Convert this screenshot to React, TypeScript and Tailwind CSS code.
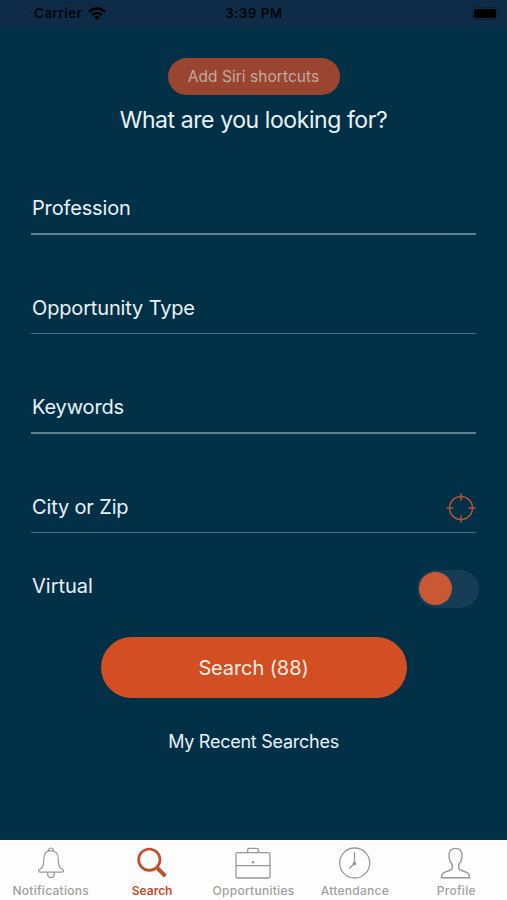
import { useState } from 'react';
import type { ReactNode } from 'react';
import clsx from 'clsx';

interface FieldProps {
  label: string;
  className: string;
  children?: ReactNode;
}

function Field({ label, className, children }: FieldProps) {
  return (
    <div className={clsx('flex items-end justify-between', className)}>
      <span className="text-[20px] leading-[30px] tracking-[-0.15px] pl-px">{label}</span>
      {children}
    </div>
  );
}

function StatusBar() {
  return (
    <div className="h-[27px] shrink-0 grid grid-cols-3 items-center pl-[15px] pr-[7px] bg-[#0e2c48] text-black text-[13.5px]">
      <div className="flex items-center">
        <span className="flex gap-[3px] w-[19px] pt-1">
          {[0, 1, 2, 3].map(i => (
            <span key={i} className="size-[1.5px] rounded-full bg-black/30" />
          ))}
        </span>
        <span className="tracking-[0.5px] w-[54px] font-medium">Carrier</span>
        <svg width="18" height="13" viewBox="0 0 18 13" fill="none" stroke="#000" strokeWidth="2.4">
          <path d="M1 4.8a11.5 11.5 0 0 1 16 0" />
          <path d="M4 8a7.2 7.2 0 0 1 10 0" />
          <path d="M9 13 6.2 10.1a4 4 0 0 1 5.6 0z" fill="#000" stroke="none" />
        </svg>
      </div>
      <span className="text-center tracking-[0.45px] whitespace-nowrap pr-[7px] font-medium">3:39 PM</span>
      <div className="flex items-center justify-end gap-px">
        <span className="w-[26px] h-[13px] rounded-[4px] border border-black/25 p-px">
          <span className="block size-full rounded-[2px] bg-black" />
        </span>
        <span className="w-[1.5px] h-[4px] rounded-r bg-black/30" />
      </div>
    </div>
  );
}

function BellIcon() {
  return (
    <svg width="28" height="34" viewBox="0 0 28 34" fill="none" stroke="#989898" strokeWidth="1.2">
      <path d="M11.6 4.9V4.4a2.4 2.4 0 0 1 4.8 0v.5" />
      <path d="M14 4.6c-4.800 0-7.200 3.400-7.200 8.400 0 6.800-1.300 8.700-4.300 10.600-1.500 1-1.500 2.600.600 2.600h21.800c2.100 0 2.100-1.600.600-2.600-3-1.900-4.300-3.800-4.300-10.600 0-5-2.400-8.400-7.200-8.400z" />
      <path d="M10.700 26.200v2a3.300 3.300 0 0 0 6.600 0v-2" />
    </svg>
  );
}

function SearchIcon() {
  return (
    <svg width="32" height="34" viewBox="0 0 32 34" fill="none" stroke="#c44f2d">
      <circle cx="13.300" cy="13.700" r="10.700" strokeWidth="2.700" />
      <path d="m20.700 21.300 8.700 8.900" strokeWidth="4" />
    </svg>
  );
}

function BriefcaseIcon() {
  return (
    <svg width="36" height="34" viewBox="0 0 36 34" fill="none" stroke="#989898" strokeWidth="1.300">
      <rect x="1" y="6.600" width="34" height="25.400" rx="1.500" />
      <path d="M12.600 6.500V4.200a1.800 1.800 0 0 1 1.800-1.800h7.200a1.800 1.800 0 0 1 1.800 1.800v2.300M1 19.700h34" />
      <circle cx="18" cy="16.200" r="1.300" fill="#989898" stroke="none" />
    </svg>
  );
}

function ClockIcon() {
  return (
    <svg width="34" height="34" viewBox="0 0 34 34" fill="none" stroke="#989898" strokeWidth="1.300">
      <circle cx="16.700" cy="17" r="15" />
      <path d="M16.500 6v11.500l-5.300 4.900" />
      <circle cx="16.500" cy="17.500" r="1.800" fill="#989898" stroke="none" />
    </svg>
  );
}

function ProfileIcon() {
  return (
    <svg width="32" height="34" viewBox="0 0 32 34" fill="none" stroke="#989898" strokeWidth="1.400">
      <path d="M15.500 2.400c-4.200 0-6.500 2.800-6.500 7 0 3.700 1 6.800 3.300 9.100v3.200c0 1.200-.700 1.900-1.700 2.300l-5.700 2.100c-2.300.900-3.400 2.400-3.500 5.600h28.200c-.100-3.200-1.200-4.700-3.500-5.600l-5.700-2.100c-1-.400-1.700-1.100-1.700-2.300v-3.200c2.300-2.300 3.300-5.400 3.300-9.100 0-4.200-2.300-7-6.500-7z" />
    </svg>
  );
}

const tabs = [
  { label: 'Notifications', icon: <BellIcon /> },
  { label: 'Search', icon: <SearchIcon /> },
  { label: 'Opportunities', icon: <BriefcaseIcon /> },
  { label: 'Attendance', icon: <ClockIcon /> },
  { label: 'Profile', icon: <ProfileIcon /> },
];

export default function App() {
  const [activeTab, setActiveTab] = useState('Search');
  const [virtual, setVirtual] = useState(false);

  return (
    <div className="w-[507px] h-[900px] flex flex-col overflow-hidden bg-[#023047] text-[#e9f3f8] font-['Inter','Liberation_Sans',sans-serif]">
      <StatusBar />

      <main className="flex-1 flex flex-col items-center pt-[31px]">
        <button className="w-[172px] h-[37px] pt-px rounded-full bg-[#99452f] text-[#c4aaa2] text-[15.5px] tracking-[0.05px]">
          Add Siri shortcuts
        </button>
        <h1 className="mt-[9px] h-[32px] leading-[32px] text-[23px] tracking-[-0.42px] whitespace-nowrap">What are you looking for?</h1>

        {/* Search form */}
        <div className="w-full pl-[31px] pr-[31px]">
          <Field label="Profession" className="h-[99px] pb-[10px] border-b-2 border-[#5f8091]" />
          <Field label="Opportunity Type" className="h-[99px] pb-[10px] border-b border-[#4a6f82]" />
          <Field label="Keywords" className="h-[100px] pb-[10px] border-b-2 border-[#5f8091]" />
          <Field label="City or Zip" className="h-[99px] pb-[10px] border-b border-[#4a6f82]">
            <svg className="translate-y-px" width="30" height="30" viewBox="0 0 30 30" fill="none" stroke="#b4533a" strokeWidth="1.500">
              <circle cx="15" cy="15" r="11.500" />
              <path d="M15 .500v7M15 22.500v7M.500 15h7M22.500 15h7" />
            </svg>
          </Field>
        </div>

        <div className="w-full pl-[32px] pr-[28px] mt-[37px] h-[38px] flex justify-between">
          <span className="text-[20px] leading-[32px]">Virtual</span>
          <button
            role="switch"
            aria-checked={virtual}
            aria-label="Virtual"
            onClick={() => setVirtual(!virtual)}
            className={clsx('w-[62px] h-[38px] rounded-full bg-[#163d55] flex items-center px-[2px] pb-px', virtual && 'justify-end')}
          >
            <span className="size-[33px] rounded-full bg-[#c95933]" />
          </button>
        </div>

        <button className="mt-[29px] w-[306px] h-[61px] pt-px rounded-full bg-[#d44e24] text-[#fdeee6] text-[20px] tracking-[-0.1px]">
          Search (88)
        </button>
        <button className="mt-[30px] h-[28px] text-[18px] leading-[28px] tracking-[-0.26px]">My Recent Searches</button>
      </main>

      {/* Tab bar */}
      <nav className="h-[60px] shrink-0 grid grid-cols-5 bg-[#fdfdfd]">
        {tabs.map(tab => (
          <button
            key={tab.label}
            onClick={() => setActiveTab(tab.label)}
            className={clsx(
              'flex flex-col items-center pt-[6px] text-[12px]',
              activeTab === tab.label ? 'text-[#c44f2d] font-semibold tracking-[0px]' : 'text-[#a0a0a0] font-medium tracking-[0.28px]'
            )}
          >
            {tab.icon}
            <span className="mt-[3px] leading-[16px]">{tab.label}</span>
          </button>
        ))}
      </nav>
    </div>
  );
}
